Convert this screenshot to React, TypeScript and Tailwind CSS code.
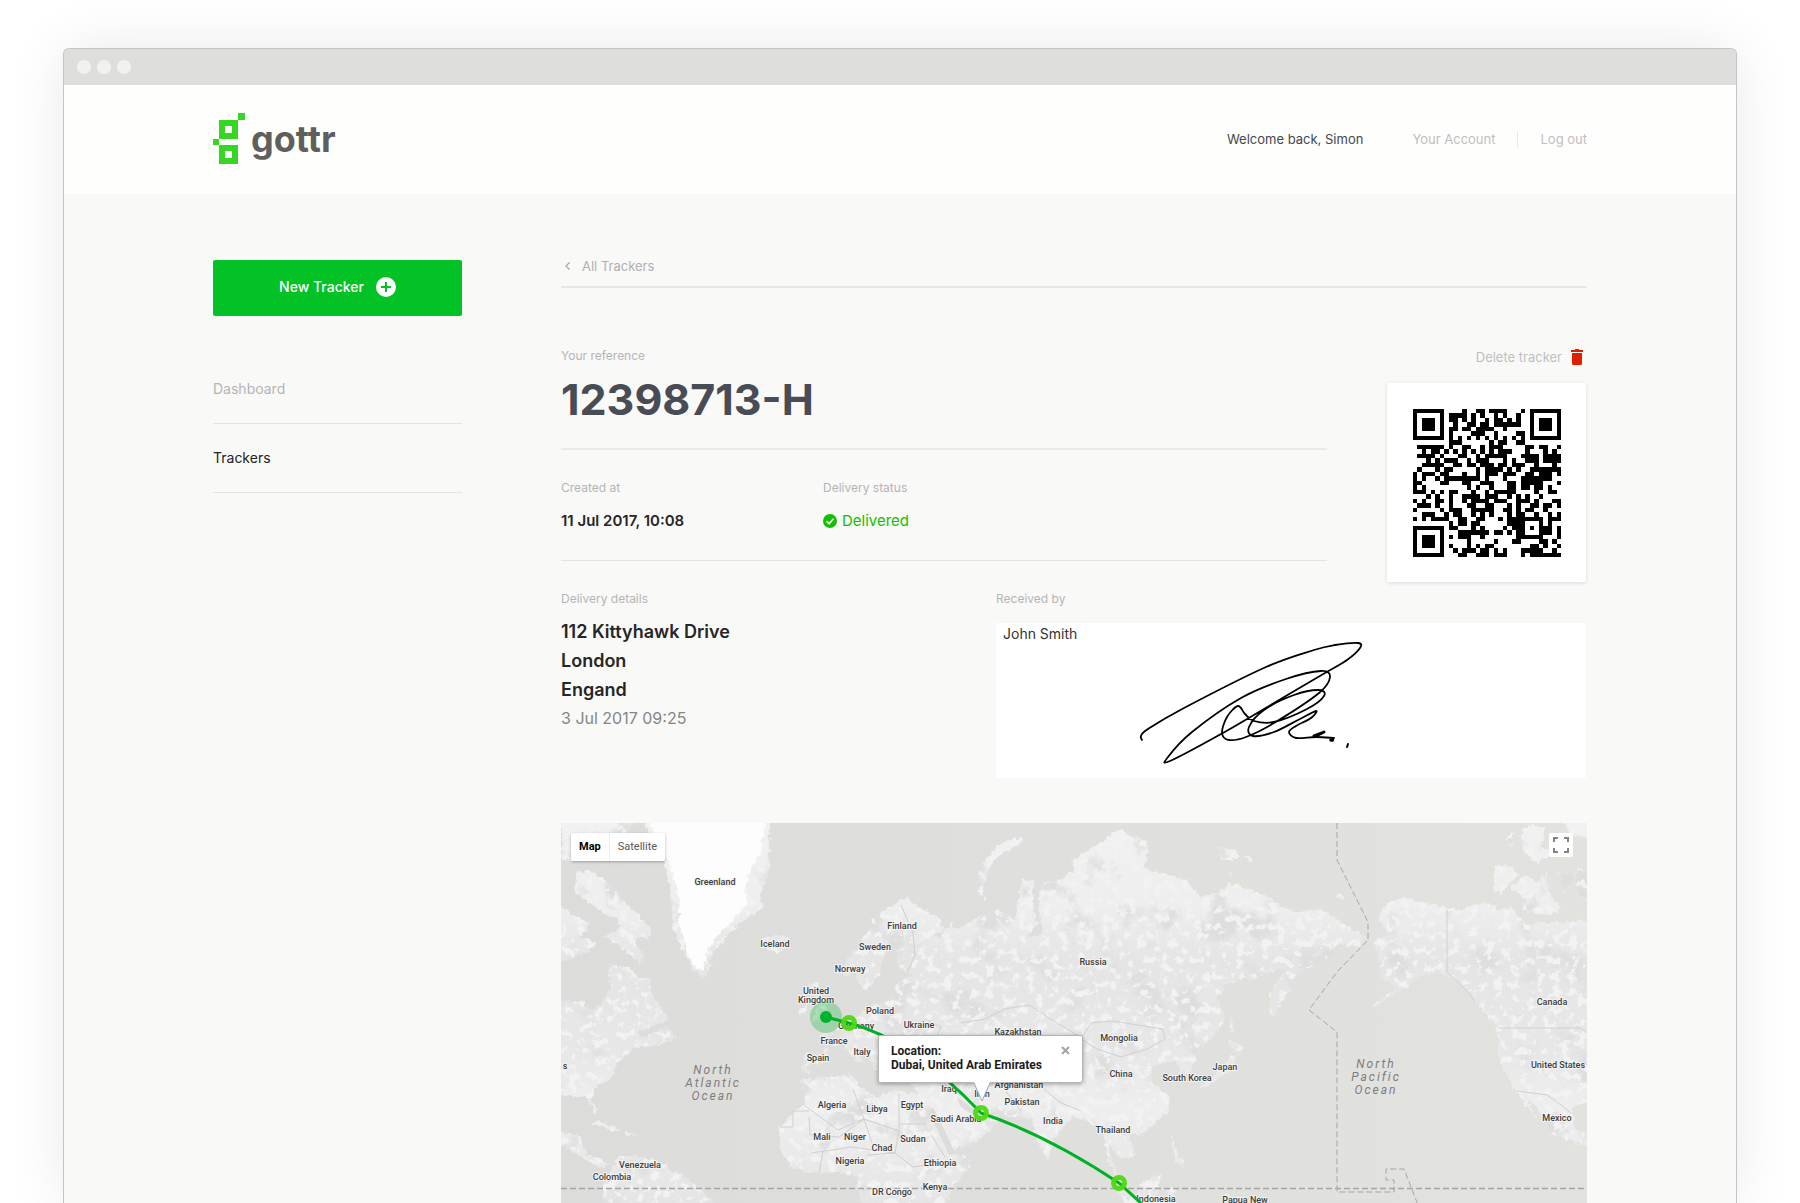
import React, { useState } from 'react';

type Point = [number, number];

const navLinks = [
    { name: 'Dashboard', active: false },
    { name: 'Trackers', active: true },
];

const countries: { name: string; x: number; y: number }[] = [
    { name: 'Greenland', x: 154, y: 59 },
    { name: 'Iceland', x: 214, y: 121 },
    { name: 'Finland', x: 341, y: 103 },
    { name: 'Sweden', x: 314, y: 124 },
    { name: 'Norway', x: 289, y: 146 },
    { name: 'United', x: 255, y: 168 },
    { name: 'Kingdom', x: 255, y: 177 },
    { name: 'Poland', x: 319, y: 188 },
    { name: 'Germany', x: 295, y: 203 },
    { name: 'Ukraine', x: 358, y: 202 },
    { name: 'France', x: 273, y: 218 },
    { name: 'Italy', x: 301, y: 229 },
    { name: 'Spain', x: 257, y: 235 },
    { name: 'Algeria', x: 271, y: 282 },
    { name: 'Libya', x: 316, y: 286 },
    { name: 'Egypt', x: 351, y: 282 },
    { name: 'Mali', x: 261, y: 314 },
    { name: 'Niger', x: 294, y: 314 },
    { name: 'Sudan', x: 352, y: 316 },
    { name: 'Chad', x: 321, y: 325 },
    { name: 'Nigeria', x: 289, y: 338 },
    { name: 'Ethiopia', x: 379, y: 340 },
    { name: 'Kenya', x: 374, y: 364 },
    { name: 'DR Congo', x: 331, y: 369 },
    { name: 'Venezuela', x: 79, y: 342 },
    { name: 'Colombia', x: 51, y: 354 },
    { name: 's', x: 4, y: 243 },
    { name: 'Saudi Arabia', x: 395, y: 296 },
    { name: 'Iraq', x: 388, y: 266 },
    { name: 'Iran', x: 421, y: 271 },
    { name: 'Kazakhstan', x: 457, y: 209 },
    { name: 'Afghanistan', x: 458, y: 262 },
    { name: 'Pakistan', x: 461, y: 279 },
    { name: 'India', x: 492, y: 298 },
    { name: 'Mongolia', x: 558, y: 215 },
    { name: 'China', x: 560, y: 251 },
    { name: 'South Korea', x: 626, y: 255 },
    { name: 'Japan', x: 664, y: 244 },
    { name: 'Russia', x: 532, y: 139 },
    { name: 'Thailand', x: 552, y: 307 },
    { name: 'Indonesia', x: 595, y: 376 },
    { name: 'Papua New', x: 684, y: 377 },
    { name: 'Canada', x: 991, y: 179 },
    { name: 'United States', x: 997, y: 242 },
    { name: 'Mexico', x: 996, y: 295 },
];

const oceans = [
    { name: 'North', x: 152, y: 247 },
    { name: 'Atlantic', x: 152, y: 260 },
    { name: 'Ocean', x: 152, y: 273 },
    { name: 'North', x: 815, y: 241 },
    { name: 'Pacific', x: 815, y: 254 },
    { name: 'Ocean', x: 815, y: 267 },
];

const stops: Point[] = [[288, 200], [420, 290], [558, 360]];

const signature: Point[] = [
    [146, 117], [145, 113], [152, 106], [188, 85], [270, 44], [318, 27], [339, 22], [362, 20], [364, 25],
    [351, 37], [329, 50], [278, 80], [225, 111], [174, 138], [172, 134], [196, 109], [245, 75], [290, 56],
    [325, 48], [334, 54], [323, 70], [278, 100], [250, 114], [233, 117], [226, 110], [231, 94], [242, 83],
    [249, 91], [258, 98], [278, 99], [311, 86], [328, 73], [323, 67], [298, 72], [268, 87], [253, 104],
    [257, 113], [278, 109], [302, 97], [320, 88], [315, 95], [300, 103], [293, 109], [300, 115], [320, 114], [338, 115],
];

// Catmull-Rom through every point, written out as cubic beziers
const smooth = (pts: Point[]) =>
    pts.slice(1).reduce((d, p, i) => {
        const p0 = pts[Math.max(i - 1, 0)];
        const p1 = pts[i];
        const p3 = pts[Math.min(i + 2, pts.length - 1)];
        return `${d} C${p1[0] + (p[0] - p0[0]) / 6},${p1[1] + (p[1] - p0[1]) / 6} ${p[0] - (p3[0] - p1[0]) / 6},${p[1] - (p3[1] - p1[1]) / 6} ${p[0]},${p[1]}`;
    }, `M${pts[0][0]},${pts[0][1]}`);

const QR_SIZE = 33;

const isDark = (x: number, y: number) => {
    const corners = [[0, 0], [QR_SIZE - 7, 0], [0, QR_SIZE - 7]];
    for (const [cx, cy] of corners) {
        const dx = Math.abs(x - cx - 3);
        const dy = Math.abs(y - cy - 3);
        const ring = Math.max(dx, dy);
        if (ring <= 4) return ring === 3 || ring <= 1;
    }
    const align = Math.max(Math.abs(x - 26), Math.abs(y - 26));
    if (align <= 2) return align !== 1;
    if (x === 6) return y % 2 === 0;
    if (y === 6) return x % 2 === 0;
    const n = Math.sin(x * 127.1 + y * 311.7) * 43758.5453;
    return n - Math.floor(n) > 0.48;
};

const qrPath = Array.from({ length: QR_SIZE * QR_SIZE }, (_, i) => [i % QR_SIZE, Math.floor(i / QR_SIZE)])
    .filter(([x, y]) => isDark(x, y))
    .map(([x, y]) => `M${x},${y}h1v1h-1z`)
    .join('');

const QrCode: React.FC = () => (
    <svg className="w-[148px] h-[148px]" viewBox={`0 0 ${QR_SIZE} ${QR_SIZE}`} shapeRendering="crispEdges" role="img" aria-label="QR code">
        <path d={qrPath} fill="#000" />
    </svg>
);

const Logo: React.FC = () => (
    <a href="#" className="flex items-center gap-[6px]">
        <svg className="w-8 h-[52px]" viewBox="0 0 32 52" fill="#37d524">
            <path fillRule="evenodd" d="M6 7h19v19H6zM12 13v7h7v-7z" />
            <path fillRule="evenodd" d="M6 32h19v19H6zM12 38v7h7v-7z" />
            <path d="M25 0h7v7h-7zM0 26h6v6H0z" />
        </svg>
        <span className="text-4xl leading-[48px] font-bold text-[#5f5f5f]">gottr</span>
    </a>
);

const WorldMap: React.FC = () => (
    <svg className="block w-full h-full" viewBox="0 0 1026 380" preserveAspectRatio="xMidYMid slice">
        <defs>
            <linearGradient id="sea" x1="0" y1="0" x2="1" y2="0">
                <stop offset="0" stopColor="#dcdcda" />
                <stop offset="1" stopColor="#e2e2df" />
            </linearGradient>
            <linearGradient id="land" x1="0" y1="0" x2="0" y2="380" gradientUnits="userSpaceOnUse">
                <stop offset="0" stopColor="#f1f1f1" />
                <stop offset="0.22" stopColor="#eeeeee" />
                <stop offset="0.36" stopColor="#e5e5e5" />
                <stop offset="0.6" stopColor="#e7e7e7" />
                <stop offset="0.75" stopColor="#eeeeee" />
                <stop offset="1" stopColor="#e5e5e5" />
            </linearGradient>
            <filter id="terrain" x="0" y="0" width="1026" height="380" filterUnits="userSpaceOnUse" colorInterpolationFilters="sRGB">
                <feTurbulence type="fractalNoise" baseFrequency="0.2" numOctaves="3" seed="4" result="coast" />
                <feDisplacementMap in="SourceGraphic" in2="coast" scale="7" xChannelSelector="R" yChannelSelector="G" result="shape" />
                <feTurbulence type="fractalNoise" baseFrequency="0.12" numOctaves="6" seed="11" />
                <feColorMatrix values="0 0 0 0 0.95  0 0 0 0 0.95  0 0 0 0 0.95  8 0 0 0 -4.3" result="light" />
                <feTurbulence type="fractalNoise" baseFrequency="0.025" numOctaves="7" seed="23" />
                <feColorMatrix values="0 0 0 0 0.87  0 0 0 0 0.87  0 0 0 0 0.87  0 6 0 0 -3.4" result="dark" />
                <feComposite in="light" in2="shape" operator="in" result="lightLand" />
                <feComposite in="dark" in2="shape" operator="in" result="darkLand" />
                <feMerge>
                    <feMergeNode in="shape" />
                    <feMergeNode in="darkLand" />
                    <feMergeNode in="lightLand" />
                </feMerge>
            </filter>
            <filter id="ice" x="60" y="-20" width="180" height="190" filterUnits="userSpaceOnUse" colorInterpolationFilters="sRGB">
                <feTurbulence type="fractalNoise" baseFrequency="0.2" numOctaves="3" seed="2" result="coast" />
                <feDisplacementMap in="SourceGraphic" in2="coast" scale="7" xChannelSelector="R" yChannelSelector="G" />
            </filter>
        </defs>
        <rect width="1026" height="380" fill="url(#sea)" />

        <g filter="url(#terrain)" fill="url(#land)">
            {/* Canadian arctic and the east coast */}
            <path d="M0,-8 H80 L60,14 30,10 12,38 0,34Z" />
            <path d="M15,50 L29,48 46,57 59,74 79,94 91,107 87,117 79,114 74,120 82,130 81,140 66,130 49,117 42,114 59,104 56,94 42,90 26,77 14,70Z" />
            <path d="M-8,80 L16,94 29,100 19,114 36,120 27,130 -8,140Z" />
            <path d="M-8,177 L22,179 32,187 41,180 50,164 46,140 66,144 79,157 88,154 92,174 102,187 107,197 89,204 76,210 82,215 106,204 116,214 96,224 76,224 56,240 49,257 36,264 29,277 37,287 34,291 26,274 -8,272Z" />
            {/* Central and South America */}
            <path d="M-8,308 L20,313 22,327 39,337 49,341 42,345 25,337 8,325 -8,320Z" />
            <path d="M29,299 L43,299 60,307 50,308Z M63,309 L80,312 66,313Z" />
            <path d="M42,390 L42,363 49,347 59,334 69,332 96,337 109,347 119,350 139,367 166,390Z" />
            {/* Greenland coast */}
            <path d="M78,-8 L103,38 108,60 111,84 112,104 120,126 132,146 143,155 150,140 154,128 168,110 182,97 202,86 199,72 208,50 209,-8Z" />
            <path d="M200,116 L212,113 226,114 229,122 216,130 204,126Z" />
            {/* British Isles */}
            <path d="M248,162 L256,158 259,172 266,186 268,196 252,198 256,186Z M238,182 L247,180 247,192 238,194Z" />
            {/* Africa */}
            <path d="M239,257 L266,254 292,252 297,264 316,274 336,267 362,272 369,287 376,307 386,330 400,332 411,332 409,344 392,364 382,390 306,390 296,367 296,354 279,349 246,350 229,344 219,324 219,304 232,290 244,280Z" />
            {/* Eurasia */}
            <path d="M283,156 L285,137 299,124 312,97 326,84 346,75 356,84 376,93 384,108 372,112 378,116 392,97 394,107 406,100 419,94 439,87 454,97 461,57 472,57 471,80 476,100 466,114 482,112 479,90 477,70 486,57 499,57 512,47 512,37 539,20 559,5 572,14 587,17 587,30 582,44 606,52 626,57 639,74 659,70 669,60 706,74 721,84 739,89 759,85 782,100 806,115 796,125 776,120 772,134 749,144 734,154 729,167 717,187 709,197 708,170 722,150 717,144 699,154 666,160 656,177 664,197 652,214 636,230 629,250 619,250 616,237 590,244 592,260 609,274 606,290 586,307 569,314 574,334 559,335 547,320 549,334 556,350 559,364 547,337 542,310 526,297 512,294 496,310 486,337 476,317 472,297 452,294 432,287 439,297 419,317 386,330 376,307 364,287 359,274 352,260 339,260 317,255 312,240 304,228 296,224 302,238 296,240 286,226 270,228 262,240 247,252 241,245 243,230 262,230 266,218 258,213 275,207 290,196 300,190 306,184 330,178 334,162 350,152 340,148 334,130 344,118 330,116 322,134 318,152 306,168 298,160 292,148Z" />
            <path d="M461,14 L439,20 422,40 414,67 427,79 421,64 429,44 442,30 459,22Z" />
            <path d="M656,24 L676,27 676,37 659,37Z M682,32 L692,35 690,39Z M667,48 L672,52 668,54Z M773,75 L782,71 783,76Z M679,34 L693,38Z" />
            {/* Japan and the islands of South East Asia */}
            <path d="M670,190 L673,205 668,210Z M668,218 L684,224 674,236 670,246 654,258 638,266 640,262 658,248 668,236Z" />
            <path d="M610,312 L616,328 624,346 614,338Z M576,362 L600,350 598,366 590,382 576,376Z M546,350 L560,358 578,382 566,382Z M604,366 L616,364 612,382Z M664,372 L706,380 660,382Z" />
            {/* North America */}
            <path d="M816,94 L826,80 842,74 866,80 896,87 926,80 946,90 966,100 1034,98 1034,135 1018,150 1022,164 1034,170 1034,277 1012,284 1012,304 1034,314 1034,324 1012,319 989,309 976,284 964,274 976,297 956,270 939,240 937,210 926,194 912,174 896,157 876,149 859,154 846,164 822,179 809,185 836,164 819,154 819,134 812,120 826,110Z" />
            <path d="M933,42 L950,44 958,52 946,62 942,72 932,66Z M950,64 L964,52 976,60 984,50 990,56 988,70 1000,84 992,92 962,90 966,78Z M998,50 L1010,46 1012,60 1004,70Z M1016,46 L1034,50 1034,80 1016,76Z M940,20 L954,6 958,14 950,24Z M960,10 L972,0 984,6 980,24 992,30 976,40 962,28Z M1000,-8 L1034,-8 1034,16 1010,12Z M930,88 L950,84 962,98 944,100Z" />
        </g>

        {/* Inland seas and lakes */}
        <g fill="#dcdcda">
            <path d="M316,244 L352,214 368,222 352,236 330,238Z M424,224 L436,218 444,244 434,254 426,240Z" />
            <path d="M564,160 L578,148 586,154 572,163Z" opacity="0.6" />
            <path d="M366,290 L376,306 388,332 394,330 384,308 372,284Z M400,284 L412,292 424,296 410,284 396,274Z" />
        </g>

        <path filter="url(#ice)" fill="#fdfdfd" d="M84,-8 L107,38 113,54 117,67 119,84 119,104 124,120 128,134 135,144 141,148 145,138 147,126 155,114 166,104 176,92 186,80 184,66 190,46 200,30 202,16 206,-8Z" />

        {/* Borders */}
        <g fill="none" stroke="#d0d0d0" strokeWidth="1">
            <path d="M243,282 L277,307 303,296 292,266M303,296 L338,308 338,270M338,301 H366M248,294 L249,312 278,314M278,314 L303,296 311,320M338,308 L334,330 306,332M219,304 L232,304 232,288 248,288M250,330 L278,326 290,324 334,330M334,330 L352,344 380,340M258,350 L262,328M370,312 L384,334" />
            <path d="M886,87 V149L904,166 914,178M937,205 H1020L1026,210M956,268 L986,272 1000,282 1010,290" />
            <path d="M520,216 L530,200 552,198 576,202 602,206 604,216 586,226 560,234 536,226Z M400,200 L424,196 444,186 468,182 496,200 516,212 502,232 470,228M340,82 L352,110 354,132 346,150M364,196 L380,204 376,212M442,250 L446,270 460,288M478,262 L500,280 520,288" />
        </g>

        {/* Equator and date line */}
        <g fill="none" stroke="#a5a5a5" strokeDasharray="6 3">
            <path d="M0,365.5 H1026" strokeWidth="1.5" />
            <path d="M776,0 V37L807,99V117L776,149 748,187 776,209V369H833V357H825V346H843L857,382" />
        </g>

        <g fontFamily="Roboto, sans-serif" fontSize="9" fontWeight="500" textAnchor="middle" fill="#3c3c3c" stroke="#f4f4f4" strokeWidth="2" strokeLinejoin="round" paintOrder="stroke">
            {countries.map((c) => (
                <text key={c.name} x={c.x} y={c.y + 3}>{c.name}</text>
            ))}
        </g>
        <g fontFamily="Roboto, sans-serif" fontSize="12" fontStyle="italic" textAnchor="middle" fill="#7d7d7d" letterSpacing="2">
            {oceans.map((o) => (
                <text key={`${o.name}-${o.x}-${o.y}`} x={o.x} y={o.y + 4}>{o.name}</text>
            ))}
        </g>

        {/* Route */}
        <circle cx="265" cy="194" r="16" fill="#00b32c" fillOpacity="0.28" />
        <path d="M265,194 L288,200 Q350,216 420,290 Q486,312 558,360 L582,382" fill="none" stroke="#00b025" strokeWidth="3" />
        <circle cx="265" cy="194" r="6" fill="#00b32c" />
        <g fill="none" stroke="#4fd810" strokeWidth="5" strokeOpacity="0.95">
            {stops.map(([x, y]) => <circle key={x} cx={x} cy={y} r="5.5" />)}
        </g>
    </svg>
);

const LocationPopup: React.FC<{ onClose: () => void }> = ({ onClose }) => (
    <div className="absolute left-[317px] top-[212px] w-[205px] h-12 rounded-xs border border-[#b5b5b5] bg-white shadow-[0_1px_4px_rgba(0,0,0,0.35)] px-3 pt-2 font-[Roboto,sans-serif]">
        <p className="text-xs leading-[14px] font-bold text-[#1b1b1b] whitespace-nowrap">
            Location:<br />Dubai, United Arab Emirates
        </p>
        <button className="absolute right-3 top-[10px] cursor-pointer" aria-label="Close" onClick={onClose}>
            <svg className="block w-[9px] h-[9px]" viewBox="0 0 9 9" stroke="#a3a3a3" strokeWidth="2">
                <path d="M1 1l7 7M8 1L1 8" />
            </svg>
        </button>
        <svg className="absolute left-[94px] top-[45px] w-[18px] h-[21px]" viewBox="0 0 18 21">
            <path d="M1 1h16L9 20z" fill="#fff" />
            <path d="M1 2l8 18 8-18" fill="none" stroke="#a8a8a8" />
        </svg>
    </div>
);

export default function App() {
    const [mapType, setMapType] = useState('Map');
    const [isPopupOpen, setIsPopupOpen] = useState(true);

    return (
        <div className="min-h-screen overflow-hidden bg-white px-16 pt-12 font-[Inter,sans-serif]">
            <div className="rounded-t-md bg-[#f9f9f8] shadow-[-1px_0_0_#c4c4c4,1px_0_0_#c4c4c4,0_0_60px_rgba(0,0,0,0.09)]">
                {/* Window bar */}
                <div className="flex h-[37px] items-center gap-[6px] rounded-t-md border-t border-[#c4c4c4] bg-[#dededd] pl-[13px]">
                    <span className="h-[14px] w-[14px] rounded-full bg-[#f1f1f0]" />
                    <span className="h-[14px] w-[14px] rounded-full bg-[#f1f1f0]" />
                    <span className="h-[14px] w-[14px] rounded-full bg-[#f1f1f0]" />
                </div>

                <header className="bg-[#fefefd]">
                    <div className="mx-auto flex h-[109px] w-full max-w-[1374px] items-center justify-between pb-[2px]">
                        <Logo />
                        <div className="flex items-center text-[13px] leading-5 text-[#bfbfbf]">
                            <span className="mr-[49px] text-[#44474d]">Welcome back, Simon</span>
                            <a href="#">Your Account</a>
                            <span className="mx-[22px] h-4 w-px bg-[#e8e8e8]" />
                            <a href="#">Log out</a>
                        </div>
                    </div>
                </header>

                <div className="mx-auto flex w-full max-w-[1374px] gap-[99px] pt-[66px]">
                    <aside className="w-[249px] shrink-0">
                        <button className="flex h-14 w-full cursor-pointer items-center justify-center gap-3 rounded-xs bg-[#02c226] pb-[2px] text-sm font-medium text-white">
                            New Tracker
                            <svg className="h-5 w-5" viewBox="0 0 20 20">
                                <circle cx="10" cy="10" r="10" fill="#fff" />
                                <path d="M10 5v10M5 10h10" stroke="#02c226" strokeWidth="2" />
                            </svg>
                        </button>
                        <nav className="mt-[39px]">
                            {navLinks.map((link) => (
                                <a
                                    key={link.name}
                                    href="#"
                                    className={`block border-b border-[#e4e4e4] py-6 text-sm ${link.active ? 'text-[#222222]' : 'text-[#b5b5b5]'}`}
                                >
                                    {link.name}
                                </a>
                            ))}
                        </nav>
                    </aside>

                    <main className="min-w-0 flex-1">
                        <div className="border-b-2 border-[#e6e7e8] pb-[14px] text-[13px] leading-3 text-[#b0b0b0]">
                            <a href="#" className="flex items-center gap-3 pl-1">
                                <svg className="h-2 w-[5px]" viewBox="0 0 5 8" fill="none" stroke="#a5a5a5" strokeWidth="1.2">
                                    <path d="M4.500 0.500L1 4l3.500 3.500" />
                                </svg>
                                All Trackers
                            </a>
                        </div>

                        <section className="flex gap-[60px] pt-[58px]">
                            <div className="flex-1">
                                <div className="border-b-2 border-[#e9eaeb] pb-6">
                                    <p className="text-xs leading-5 text-[#b5b5b5]">Your reference</p>
                                    <h1 className="mt-2 text-[43px] leading-[50px] font-bold text-[#484c54]">12398713-H</h1>
                                </div>
                                <dl className="grid grid-cols-[262px_1fr] border-b border-[#e4e4e4] pt-7 pb-7">
                                    <div>
                                        <dt className="text-xs leading-5 text-[#b5b5b5]">Created at</dt>
                                        <dd className="mt-3 text-[15px] leading-[22px] font-semibold text-[#262626]">11 Jul 2017, 10:08</dd>
                                    </div>
                                    <div>
                                        <dt className="text-xs leading-5 text-[#b5b5b5]">Delivery status</dt>
                                        <dd className="mt-3 flex items-center gap-[5px] text-[15px] leading-[22px] text-[#12c000]">
                                            <svg className="h-[14px] w-[14px]" viewBox="0 0 14 14">
                                                <circle cx="7" cy="7" r="7" fill="#12c000" />
                                                <path d="M3.500 7.200l2.500 2.500 4.500-5" fill="none" stroke="#fff" strokeWidth="1.700" />
                                            </svg>
                                            Delivered
                                        </dd>
                                    </div>
                                </dl>
                            </div>
                            <div className="flex w-[200px] flex-col items-end pr-px">
                                <button className="flex cursor-pointer items-center gap-[9px] pr-[3px] text-[13px] leading-[22px] text-[#bfbfbf]">
                                    Delete tracker
                                    <svg className="h-4 w-3" viewBox="0 0 12 16" fill="#dd1f00">
                                        <path d="M0 1h3.500l.7-1h3.600l.7 1H12v2H0zM1 4h10v10.500a1.500 1.500 0 0 1-1.500 1.500h-7A1.500 1.500 0 0 1 1 14.500z" />
                                    </svg>
                                </button>
                                <div className="mt-[15px] flex h-[199px] w-[199px] items-center justify-center bg-white shadow-[0_1px_4px_rgba(0,0,0,0.13)]">
                                    <QrCode />
                                </div>
                            </div>
                        </section>

                        <section className="flex justify-between pt-[7px] pr-px">
                            <div>
                                <p className="text-xs leading-5 text-[#b5b5b5]">Delivery details</p>
                                <address className="mt-2 text-lg leading-[29px] font-semibold text-[#262626] not-italic">
                                    112 Kittyhawk Drive<br />
                                    London<br />
                                    Engand
                                </address>
                                <p className="text-base leading-[29px] text-[#868686]">3 Jul 2017 09:25</p>
                            </div>
                            <div className="w-[590px]">
                                <p className="text-xs leading-5 text-[#b5b5b5]">Received by</p>
                                <div className="relative mt-[14px] h-[155px] bg-white px-[7px] text-sm leading-[22px] text-[#333333]">
                                    John Smith
                                    <svg className="absolute top-0 left-0 h-full w-full" viewBox="0 0 590 155" preserveAspectRatio="xMinYMin meet" fill="none" stroke="#000" strokeWidth="1.800" strokeLinecap="round">
                                        <path d={smooth(signature)} />
                                        <path d="M318 113l8-3M320 113l8-4" strokeWidth="3" />
                                        <path d="M335 117h1.500" strokeWidth="3.500" />
                                        <path d="M352 121l-1 3" strokeWidth="2" />
                                    </svg>
                                </div>
                            </div>
                        </section>

                        <section className="relative mt-[45px] h-[380px] overflow-hidden bg-[#dededc]">
                            <WorldMap />
                            <div className="absolute top-[10px] left-[10px] flex h-7 rounded-xs bg-white font-[Roboto,sans-serif] text-[11px] shadow-[0_1px_3px_rgba(0,0,0,0.3)]">
                                {['Map', 'Satellite'].map((type) => (
                                    <button
                                        key={type}
                                        onClick={() => setMapType(type)}
                                        className={`cursor-pointer border-r border-[#eeeeee] px-2 last:border-r-0 ${mapType === type ? 'font-bold text-black' : 'text-[#565656]'}`}
                                    >
                                        {type}
                                    </button>
                                ))}
                            </div>
                            <button className="absolute top-[10px] right-[14px] flex h-6 w-6 cursor-pointer items-center justify-center rounded-xs bg-white" aria-label="Toggle fullscreen">
                                <svg className="h-4 w-4" viewBox="0 0 16 16" fill="none" stroke="#858585" strokeWidth="2">
                                    <path d="M1 5V1h4M11 1h4v4M15 11v4h-4M5 15H1v-4" />
                                </svg>
                            </button>
                            {isPopupOpen && <LocationPopup onClose={() => setIsPopupOpen(false)} />}
                        </section>
                    </main>
                </div>
            </div>
        </div>
    );
}
